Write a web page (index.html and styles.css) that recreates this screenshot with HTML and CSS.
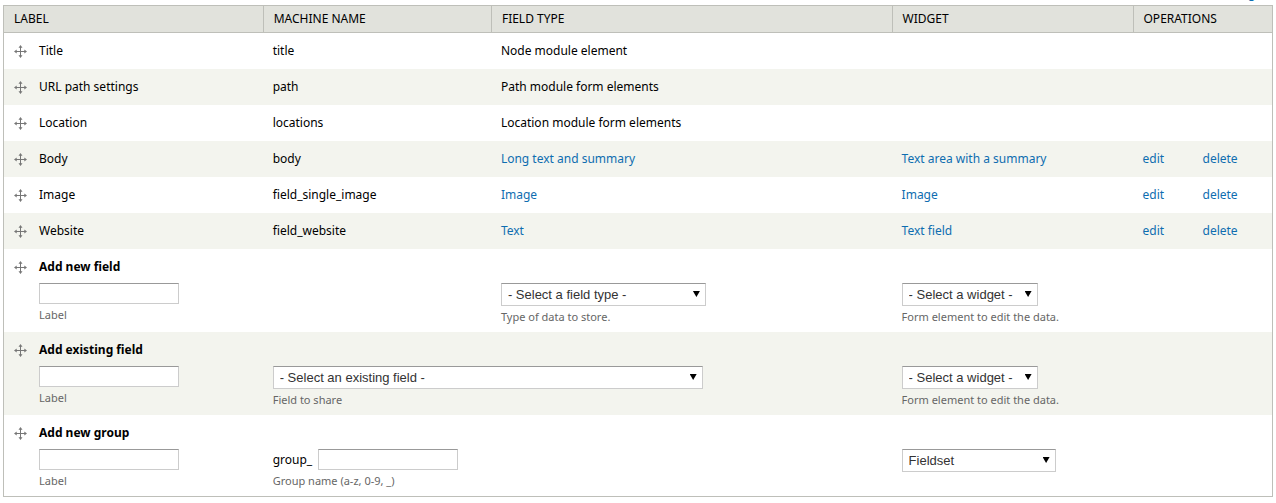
FILE: index.html
```html
<!DOCTYPE html>
<html lang="en">
<head>
<meta charset="utf-8">
<title>Manage fields</title>
<link rel="stylesheet" href="styles.css">
</head>
<body>
<svg class="sprite" aria-hidden="true">
  <symbol id="move" viewBox="0 0 13 13">
    <path d="M6.500 1v11M1 6.500h11" stroke="#777" stroke-width="1" fill="none"/>
    <path d="M6.500 0L8.500 2.700h-4zM6.500 13L8.500 10.300h-4zM0 6.500L2.700 4.500v4zM13 6.500L10.300 4.500v4z" fill="#777"/>
  </symbol>
</svg>
<div class="toolbar"><a href="#">Show row weights</a></div>
<table class="fields">
  <colgroup><col class="col-label"><col class="col-name"><col class="col-type"><col class="col-widget"><col></colgroup>
  <thead>
    <tr><th>LABEL</th><th>MACHINE NAME</th><th>FIELD TYPE</th><th>WIDGET</th><th>OPERATIONS</th></tr>
  </thead>
  <tbody>
    <tr><td><div class="item"><svg class="handle"><use href="#move"/></svg>Title</div></td><td>title</td><td>Node module element</td><td></td><td></td></tr>
    <tr><td><div class="item"><svg class="handle"><use href="#move"/></svg>URL path settings</div></td><td>path</td><td>Path module form elements</td><td></td><td></td></tr>
    <tr><td><div class="item"><svg class="handle"><use href="#move"/></svg>Location</div></td><td>locations</td><td>Location module form elements</td><td></td><td></td></tr>
    <tr><td><div class="item"><svg class="handle"><use href="#move"/></svg>Body</div></td><td>body</td><td><a href="#">Long text and summary</a></td><td><a href="#">Text area with a summary</a></td><td><div class="ops"><a href="#">edit</a><a href="#">delete</a></div></td></tr>
    <tr><td><div class="item"><svg class="handle"><use href="#move"/></svg>Image</div></td><td>field_single_image</td><td><a href="#">Image</a></td><td><a href="#">Image</a></td><td><div class="ops"><a href="#">edit</a><a href="#">delete</a></div></td></tr>
    <tr><td><div class="item"><svg class="handle"><use href="#move"/></svg>Website</div></td><td>field_website</td><td><a href="#">Text</a></td><td><a href="#">Text field</a></td><td><div class="ops"><a href="#">edit</a><a href="#">delete</a></div></td></tr>
    <tr class="add">
      <td><div class="item"><svg class="handle"><use href="#move"/></svg><div class="group"><strong>Add new field</strong><input class="text" type="text" id="new-label"><label class="hint" for="new-label">Label</label></div></div></td>
      <td></td>
      <td class="control"><div class="select select-type"><select id="new-type"><option>- Select a field type -</option></select></div><label class="hint" for="new-type">Type of data to store.</label></td>
      <td class="control"><div class="select select-widget"><select id="new-widget"><option>- Select a widget -</option></select></div><label class="hint" for="new-widget">Form element to edit the data.</label></td>
      <td></td>
    </tr>
    <tr class="add">
      <td><div class="item"><svg class="handle"><use href="#move"/></svg><div class="group"><strong>Add existing field</strong><input class="text" type="text" id="existing-label"><label class="hint" for="existing-label">Label</label></div></div></td>
      <td class="control" colspan="2"><div class="select select-existing"><select id="existing-field"><option>- Select an existing field -</option></select></div><label class="hint" for="existing-field">Field to share</label></td>
      <td class="control"><div class="select select-widget"><select id="existing-widget"><option>- Select a widget -</option></select></div><label class="hint" for="existing-widget">Form element to edit the data.</label></td>
      <td></td>
    </tr>
    <tr class="add">
      <td><div class="item"><svg class="handle"><use href="#move"/></svg><div class="group"><strong>Add new group</strong><input class="text" type="text" id="group-label"><label class="hint" for="group-label">Label</label></div></div></td>
      <td class="control"><div class="prefixed"><span>group_</span><input class="text" type="text" id="group-name"></div><label class="hint" for="group-name">Group name (a-z, 0-9, _)</label></td>
      <td></td>
      <td class="control"><div class="select select-format"><select aria-label="Group format"><option>Fieldset</option></select></div></td>
      <td></td>
    </tr>
  </tbody>
</table>
</body>
</html>
```
FILE: styles.css
```css
* { box-sizing: border-box; }
body {
  margin: 0 3px 6px;
  background: #fff;
  color: #000;
  font: 12px/18px "Noto Sans", "Open Sans", sans-serif;
}
a { color: #0e6db0; text-decoration: none; }
.sprite { display: none; }
.toolbar {
  display: flex;
  justify-content: flex-end;
  align-items: flex-end;
  height: 5px;
  overflow: hidden;
  line-height: 22px;
}
.fields {
  width: 100%;
  table-layout: fixed;
  border: 1px solid #bebfb9;
  border-spacing: 0;
}
.col-label { width: 20.4%; }
.col-name { width: 18%; }
.col-type { width: 31.6%; }
.col-widget { width: 19%; }
th {
  padding: 4px 10px;
  border-bottom: 1px solid #bebfb9;
  background: #e1e2dc;
  font-weight: 400;
  text-align: left;
}
th + th { border-left: 1px solid #bebfb9; }
td { padding: 9px 10px; vertical-align: top; white-space: nowrap; }
tbody tr:nth-child(even) { background: #f3f4ee; }
.add td { padding-bottom: 6px; }
.add .control { padding-top: 34px; }
.item { display: flex; gap: 12px; }
.handle { flex: none; width: 13px; height: 13px; margin-top: 3px; }
.ops { display: grid; grid-template-columns: 60px auto; }
.group { display: flex; flex-direction: column; align-items: flex-start; }
.group .text { margin-top: 7px; }
.text, select {
  border: 1px solid #ccc;
  border-top-color: #999;
  border-radius: 0;
  background: #fff;
  color: #333;
  font: 13px "Liberation Sans", Arial, sans-serif;
}
.text { width: 140px; height: 21px; padding: 2px; }
.hint { display: block; margin-top: 2px; color: #666; font-size: 11px; }
.prefixed { display: flex; align-items: center; gap: 6px; }
.select { position: relative; max-width: 100%; }
select {
  display: block;
  width: 100%;
  height: 23px;
  padding: 0 20px 0 6px;
  appearance: none;
}
.select::after {
  content: "";
  position: absolute;
  top: 8px;
  right: 6px;
  width: 7px;
  height: 6px;
  background: #000;
  clip-path: polygon(0 0, 100% 0, 50% 100%);
  pointer-events: none;
}
.select-type { width: 205px; }
.select-widget { width: 136px; }
.select-existing { width: 430px; }
.select-format { width: 154px; }
```
